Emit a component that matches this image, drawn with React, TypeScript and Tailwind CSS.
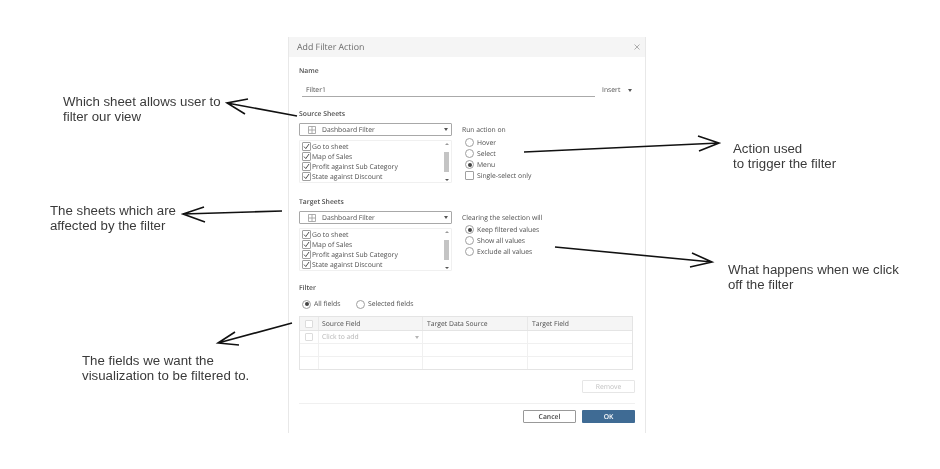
const sheets = ["Go to sheet", "Map of Sales", "Profit against Sub Category", "State against Discount"];

function Check({ checked = false }: { checked?: boolean }) {
  return (
    <span className="flex h-[9px] w-[9px] shrink-0 items-center justify-center rounded-[1px] border border-[#a0a0a0] bg-white">
      {checked && (
        <svg width="7" height="7" viewBox="0 0 7 7" fill="none">
          <path d="M1 3.6 L2.8 5.6 L6 1" stroke="#555" strokeWidth="1" />
        </svg>
      )}
    </span>
  );
}

function Radio({ on = false, label }: { on?: boolean; label: string }) {
  return (
    <div className="flex h-[11px] items-center gap-[3px] pl-[3px]">
      <span className="flex h-[9px] w-[9px] shrink-0 items-center justify-center rounded-full border border-[#a0a0a0] bg-white">
        {on && <span className="h-[4px] w-[4px] rounded-full bg-[#444]" />}
      </span>
      <span className="pt-[1px]">{label}</span>
    </div>
  );
}

function Caret({ color = "#555" }: { color?: string }) {
  return (
    <svg width="4" height="3" viewBox="0 0 4 3" className="shrink-0">
      <path d="M0 0 H4 L2 3 Z" fill={color} />
    </svg>
  );
}

function SheetPicker() {
  return (
    <div className="flex w-[153px] shrink-0 flex-col gap-[4px]">
      <div className="flex h-[13px] items-center rounded-[1px] border border-[#a8a8a8] pl-[8px] pr-[3px]">
        <svg width="8" height="8" viewBox="0 0 8 8" fill="none" className="shrink-0">
          <path d="M0.5 0.5 H7.5 V7.5 H0.5 Z M4 0.5 V7.5 M0.5 4 H7.5" stroke="#999" strokeWidth="0.8" />
        </svg>
        <span className="ml-[6px] flex-1 pt-[1px]">Dashboard Filter</span>
        <Caret />
      </div>
      <div className="flex h-[43px] rounded-[1px] border border-[#f0f0f0]">
        <div className="flex flex-1 flex-col pl-[2px] pt-[0.5px]">
          {sheets.map((s) => (
            <div key={s} className="flex h-[11px] items-center gap-[1px]">
              <Check checked />
              <span className="pt-[1px]">{s}</span>
            </div>
          ))}
        </div>
        <div className="mr-[1px] flex w-[7px] flex-col items-center justify-between py-[1.5px]">
          <span className="h-0 w-0 border-x-[2px] border-b-[2px] border-x-transparent border-b-[#999]" />
          <span className="h-[20px] w-[5px] bg-[#c4c4c4]" />
          <span className="h-0 w-0 border-x-[2px] border-t-[2px] border-x-transparent border-t-[#555]" />
        </div>
      </div>
    </div>
  );
}

function Arrow({ from, tip, b1, b2 }: { from: string; tip: string; b1: string; b2: string }) {
  return <path d={`M${from} L${tip} M${b1} L${tip} L${b2}`} fill="none" stroke="#111" strokeWidth="1.6" />;
}

const rowCols = "grid h-[13px] grid-cols-[19px_104px_105px_1fr] border-b border-[#f0f0f0]";
const note = "absolute font-['Liberation_Sans',sans-serif] text-[13.25px] leading-[15px] text-[#3a3a3a]";
const label = "flex h-[12px] items-center pt-[1px] font-semibold";

export default function App() {
  return (
    <div className="relative h-[469px] w-[940px] overflow-hidden bg-white pl-[288px] pt-[37px] font-['Open_Sans',sans-serif] text-[6.8px] leading-none text-[#4f4f4f] blur-[0.4px]">
      <div className="flex h-[396px] w-[358px] flex-col border-x border-[#e8e8e8] [text-rendering:geometricPrecision]">
        <div className="flex h-[20px] shrink-0 items-center justify-between bg-[#f5f5f5] pl-[8px] pr-[5px]">
          <span className="text-[8.8px] text-[#6b6b6b]">Add Filter Action</span>
          <svg width="6" height="6" viewBox="0 0 6 6" fill="none">
            <path d="M0.5 0.5 L5.5 5.5 M5.5 0.5 L0.5 5.5" stroke="#999" strokeWidth="0.8" />
          </svg>
        </div>

        <div className="flex flex-1 flex-col px-[10px]">
          <div className={`mt-[8px] ${label}`}>Name</div>
          <div className="mt-[7px] flex h-[13px] items-start">
            <div className="ml-[3px] flex h-[13px] w-[293px] items-center border-b border-[#aaa] pl-[4px] pt-[1px]">Filter1</div>
            <div className="ml-[7px] flex h-[12px] flex-1 items-center justify-between pr-[3px]">
              <span className="pt-[1px]">Insert</span>
              <Caret />
            </div>
          </div>

          <div className={`mt-[11px] ${label}`}>Source Sheets</div>
          <div className="mt-[3px] flex">
            <SheetPicker />
            <div className="ml-[10px] flex flex-col">
              <div className="mt-[1px] flex h-[12px] items-center pt-[1px]">Run action on</div>
              <div className="mt-[1px] flex flex-col">
                <Radio label="Hover" />
                <Radio label="Select" />
                <Radio on label="Menu" />
                <div className="flex h-[11px] items-center gap-[3px] pl-[3px]">
                  <Check />
                  <span className="pt-[1px]">Single-select only</span>
                </div>
              </div>
            </div>
          </div>

          <div className={`mt-[13px] ${label}`}>Target Sheets</div>
          <div className="mt-[3px] flex">
            <SheetPicker />
            <div className="ml-[10px] flex flex-col">
              <div className="mt-[1px] flex h-[12px] items-center pt-[1px]">Clearing the selection will</div>
              <div className="flex flex-col">
                <Radio on label="Keep filtered values" />
                <Radio label="Show all values" />
                <Radio label="Exclude all values" />
              </div>
            </div>
          </div>

          <div className={`mt-[11px] ${label}`}>Filter</div>
          <div className="mt-[4px] flex h-[12px] items-center">
            <div className="w-[54px]"><Radio on label="All fields" /></div>
            <Radio label="Selected fields" />
          </div>

          <div className="mt-[6px] h-[54px] w-[334px] border border-[#e4e4e4]">
            <div className="grid h-[14px] grid-cols-[19px_104px_105px_1fr] border-b border-[#e4e4e4] bg-[#f5f5f5]">
              <div className="flex items-center justify-center border-r border-[#e8e8e8]">
                <span className="h-[8px] w-[8px] rounded-[1px] border border-[#dcdcdc] bg-white" />
              </div>
              <div className="flex items-center border-r border-[#e8e8e8] pl-[3px] pt-[1px]">Source Field</div>
              <div className="flex items-center border-r border-[#e8e8e8] pl-[4px] pt-[1px]">Target Data Source</div>
              <div className="flex items-center pl-[4px] pt-[1px]">Target Field</div>
            </div>
            <div className={rowCols}>
              <div className="flex items-center justify-center border-r border-[#f0f0f0]">
                <span className="h-[8px] w-[8px] rounded-[1px] border border-[#dcdcdc] bg-white" />
              </div>
              <div className="flex items-center justify-between border-r border-[#f0f0f0] px-[3px] text-[#b5b5b5]">
                <span className="pt-[1px]">Click to add</span>
                <Caret color="#b5b5b5" />
              </div>
              <div className="border-r border-[#f0f0f0]" />
              <div />
            </div>
            <div className={rowCols}>
              <div className="border-r border-[#f0f0f0]" />
              <div className="border-r border-[#f0f0f0]" />
              <div className="border-r border-[#f0f0f0]" />
              <div />
            </div>
            <div className="grid h-[12px] grid-cols-[19px_104px_105px_1fr]">
              <div className="border-r border-[#f0f0f0]" />
              <div className="border-r border-[#f0f0f0]" />
              <div className="border-r border-[#f0f0f0]" />
              <div />
            </div>
          </div>

          <div className="mt-[10px] flex justify-end">
            <div className="flex h-[13px] w-[53px] items-center justify-center rounded-[1px] border border-[#e6e6e6] pt-[1px] text-[#c2c2c2]">Remove</div>
          </div>
          <div className="mt-[10px] h-px bg-[#f0f0f0]" />
          <div className="mt-[6px] flex justify-end gap-[6px]">
            <div className="flex h-[13px] w-[53px] items-center justify-center rounded-[1px] border border-[#999] pt-[1px] font-semibold text-[#444]">Cancel</div>
            <div className="flex h-[13px] w-[53px] items-center justify-center rounded-[1px] bg-[#3f6b94] pt-[1px] font-semibold text-white">OK</div>
          </div>
        </div>
      </div>

      <div className={`${note} left-[63px] top-[94px]`}>
        Which sheet allows user to<br />filter our view
      </div>
      <div className={`${note} left-[50px] top-[203px]`}>
        The sheets which are<br />affected by the filter
      </div>
      <div className={`${note} left-[82px] top-[353px]`}>
        The fields we want the<br />visualization to be filtered to.
      </div>
      <div className={`${note} left-[733px] top-[141px]`}>
        Action used<br />to trigger the filter
      </div>
      <div className={`${note} left-[728px] top-[262px]`}>
        What happens when we click<br />off the filter
      </div>

      <svg className="pointer-events-none absolute left-0 top-0" width="940" height="469">
        <Arrow from="297,116" tip="227,103" b1="248,99" b2="245,114" />
        <Arrow from="282,211" tip="183,214" b1="204,207" b2="205,222" />
        <Arrow from="292,323" tip="218,343" b1="235,332" b2="239,345" />
        <Arrow from="524,152" tip="719,143" b1="698,136" b2="699,151" />
        <Arrow from="555,247" tip="712,262" b1="692,253" b2="690,267" />
      </svg>
    </div>
  );
}
